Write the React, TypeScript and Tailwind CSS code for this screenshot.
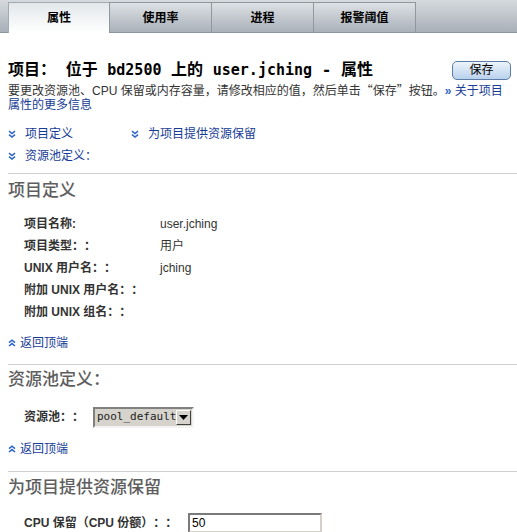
import React from "react";

const font = { fontFamily: '"Liberation Sans", "Noto Sans CJK SC", sans-serif' };

function ChevDown() {
  return (
    <svg width="8" height="8" viewBox="0 0 8 8" className="shrink-0">
      <path d="M1 1.2 L4 3.6 L7 1.2" fill="none" stroke="#2f66c8" strokeWidth="1.6" />
      <path d="M1 4.6 L4 7 L7 4.6" fill="none" stroke="#2f66c8" strokeWidth="1.6" />
    </svg>
  );
}

function ChevUp() {
  return (
    <svg width="8" height="8" viewBox="0 0 8 8" className="shrink-0">
      <path d="M1 3.6 L4 1.2 L7 3.6" fill="none" stroke="#2f66c8" strokeWidth="1.6" />
      <path d="M1 7 L4 4.6 L7 7" fill="none" stroke="#2f66c8" strokeWidth="1.6" />
    </svg>
  );
}

function Tab({ label, active }: { label: string; active?: boolean }) {
  if (active) {
    return (
      <div className="relative -mb-px flex h-[31px] w-[101px] items-center justify-center border-l border-t border-[#a3aab2] bg-gradient-to-b from-[#e3e7ea] to-white text-[12px] font-bold text-black">
        {label}
      </div>
    );
  }
  return (
    <div className="flex h-[30px] w-[102px] items-center justify-center border-l border-t border-[#8f979f] bg-gradient-to-b from-[#dde1e5] to-[#aab1b9] text-[12px] font-bold text-black">
      {label}
    </div>
  );
}

function BackTop() {
  return (
    <div className="flex h-[20px] items-center gap-[4px] text-[12px] text-[#163c96]">
      <ChevUp />
      <span>返回顶端</span>
    </div>
  );
}

function Heading({ children }: { children: React.ReactNode }) {
  return <div className="h-[20px] text-[17px] leading-[20px] font-medium text-[#5e5e5e]">{children}</div>;
}

function Sep() {
  return <div className="h-px bg-[#cfcfcf]" />;
}

const cjk = { fontFamily: '"Noto Sans CJK SC", sans-serif' };

export default function App() {
  const rows: [string, string][] = [
    ["项目名称:", "user.jching"],
    ["项目类型：：", "用户"],
    ["UNIX 用户名：：", "jching"],
    ["附加 UNIX 用户名：：", ""],
    ["附加 UNIX 组名：：", ""],
  ];
  return (
    <div className="h-[532px] w-[517px] overflow-hidden bg-white [text-spacing-trim:space-all]" style={font}>
      {/* tab bar */}
      <div className="flex h-[33px] items-end border-b border-[#8d959e] bg-gradient-to-b from-[#d6dade] to-[#a9b0b8] pl-[8px]">
        <Tab label="属性" active />
        <Tab label="使用率" />
        <Tab label="进程" />
        <div className="border-r border-[#8f979f]">
          <Tab label="报警阈值" />
        </div>
      </div>

      <div className="pl-[8px]">
        {/* title */}
        <div className="mt-[27px] flex h-[20px] items-center justify-between pr-[6px]">
          <div
            className="text-[16px] leading-[20px] font-bold text-black"
            style={{ fontFamily: '"DejaVu Sans Mono", "Noto Sans CJK SC", monospace' }}
          >
            项目：&nbsp;位于 <span className="text-[15px]">bd2500</span> 上的 <span className="text-[15px]">user.jching</span> - 属性
          </div>
          <button className="flex h-[19px] w-[59px] items-center justify-center rounded-[5px] border border-[#5b7ea8] bg-gradient-to-b from-[#eef4fb] to-[#b9d1ec] text-[12px] text-black">
            保存
          </button>
        </div>

        {/* description */}
        <div className="mt-[3px] pr-[4px] text-[12px] leading-[14px] text-[#333]">
          要更改资源池、CPU 保留或内存容量，请修改相应的值，然后单击<span style={cjk}>“保存”</span>按钮。
          <span className="font-bold text-[#2f66c8]">»</span>{" "}
          <span className="text-[#163c96]">
            关于项目
            <br />
            属性的更多信息
          </span>
        </div>

        {/* jump links */}
        <div className="mt-[11px] text-[12px] leading-[22px] text-[#163c96]">
          <div className="flex h-[22px] items-center">
            <div className="flex w-[123px] items-center gap-[9px]">
              <ChevDown />
              <span>项目定义</span>
            </div>
            <div className="flex items-center gap-[9px]">
              <ChevDown />
              <span>为项目提供资源保留</span>
            </div>
          </div>
          <div className="flex h-[22px] items-center gap-[9px]">
            <ChevDown />
            <span>资源池定义：</span>
          </div>
        </div>

        <div className="mt-[6px]">
          <Sep />
        </div>
        <div className="mt-[7px]">
          <Heading>项目定义</Heading>
        </div>

        <div className="mt-[12px] pl-[16px] text-[12px] leading-[22px] text-[#333]">
          {rows.map(([l, v]) => (
            <div key={l} className="flex h-[22px] items-center">
              <div className="w-[136px] font-bold">{l}</div>
              <div>{v}</div>
            </div>
          ))}
        </div>

        <div className="mt-[10px]">
          <BackTop />
        </div>
        <div className="mt-[11px]">
          <Sep />
        </div>
        <div className="mt-[5px]">
          <Heading>资源池定义：</Heading>
        </div>

        <div className="mt-[17px] flex h-[20px] items-center pl-[16px] text-[12px] text-[#333]">
          <div className="w-[69px] font-bold">资源池：：</div>
          <div className="flex h-[21px] w-[101px] items-stretch border-2 border-t-[#808080] border-l-[#808080] border-b-[#f4f4f4] border-r-[#f4f4f4] bg-[#d6d3cc]">
            <div
              className="flex flex-1 items-center pl-[2px] text-[#222]"
              style={{ fontFamily: '"DejaVu Sans Mono", monospace', fontSize: "11px" }}
            >
              pool_default
            </div>
            <div className="my-[1px] mr-[1px] flex w-[15px] items-center justify-center border border-t-white border-l-white border-b-[#404040] border-r-[#404040] bg-[#d6d3cc]">
              <svg width="9" height="5" viewBox="0 0 9 5">
                <path d="M0 0 H9 L4.5 5 Z" fill="#000" />
              </svg>
            </div>
          </div>
        </div>

        <div className="mt-[12px]">
          <BackTop />
        </div>
        <div className="mt-[12px]">
          <Sep />
        </div>
        <div className="mt-[6px]">
          <Heading>为项目提供资源保留</Heading>
        </div>

        <div className="mt-[15px] flex h-[20px] items-center pl-[16px] text-[12px] text-[#333]">
          <div className="w-[164px] font-bold">CPU 保留（CPU 份额）：：</div>
          <div className="flex h-[20px] w-[134px] items-center border-2 border-t-[#7a7a7a] border-l-[#7a7a7a] border-b-[#d4d0c8] border-r-[#d4d0c8] bg-white pl-[2px] text-[12px] text-black">
            50
          </div>
        </div>
      </div>
    </div>
  );
}
